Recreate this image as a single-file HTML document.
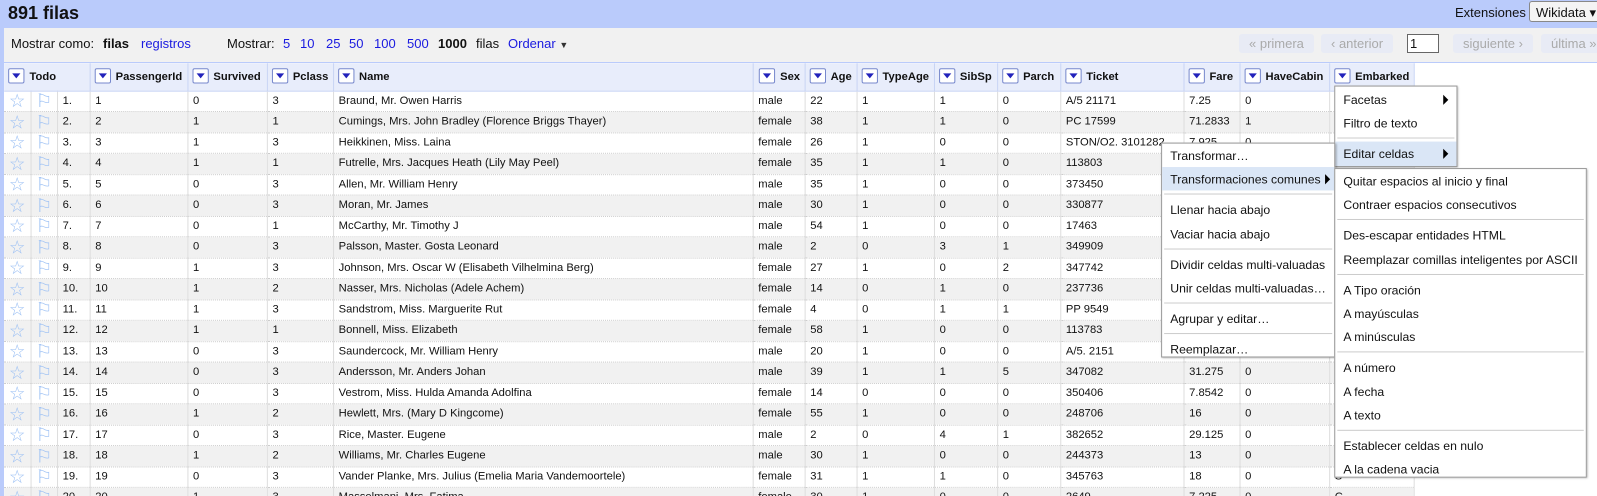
<!DOCTYPE html>
<html style="overflow:hidden;width:1597px;height:496px"><head><meta charset="utf-8"><style>
*{box-sizing:border-box;margin:0;padding:0}
body{width:1597px;height:496px;overflow:hidden;font-family:"Liberation Sans",sans-serif;background:#fff;position:relative;color:#111}
.top{position:absolute;left:0;top:0;width:1597px;height:28px;background:#bacbfb}
.top h1{position:absolute;left:8px;top:3px;font-size:18px;font-weight:bold}
.ext{position:absolute;left:1455px;top:5px;font-size:13px}
.wk{position:absolute;left:1529px;top:1px;width:68px;height:21px;border:1px solid #888;border-right:0;border-radius:3px 0 0 3px;background:#f4f4f4;font-size:13px;padding:3px 6px;white-space:nowrap;overflow:hidden}
.bar{position:absolute;left:4px;top:28px;width:1593px;height:35px;background:#f1f1f1;border-bottom:1px solid #bacbfb;font-size:13px;overflow:hidden}
.bar span{position:absolute;top:8px;white-space:nowrap}
.lnk{color:#1a1ae0}
.pg{position:absolute;top:6px;height:19px;background:#e8ebf5;color:#aaa;font-size:13px;padding:2px 10px;border-radius:3px;white-space:nowrap}
.side{position:absolute;left:0;top:27px;width:4px;height:469px;background:#bacbfb}
.sc{position:absolute;left:0;top:0;width:1568px;height:487px;transform:scale(1.0185);transform-origin:0 0;overflow:hidden}
.wrap{position:absolute;left:4px;top:62px;width:1400px;height:430px;overflow:hidden}
table{width:1384px;border-collapse:collapse;table-layout:fixed;font-size:11px}
th{height:27px;background:#e8edfb;border-right:1px solid #c8d4f4;border-bottom:1px solid #c8d4f4;text-align:left;font-size:11px;font-weight:bold;padding-left:4px;white-space:nowrap}
.dd{display:inline-block;width:16px;height:15px;border:1px solid #7788cc;background:#fff;border-radius:2px;vertical-align:middle;margin-right:5px;position:relative;top:-1px}
.dd:after{content:"";position:absolute;left:3px;top:4px;border-left:4px solid transparent;border-right:4px solid transparent;border-top:5px solid #2222bb}
tr.r{height:20.5px}
td{border-right:1px solid #ddd;border-bottom:1px dotted #ccc;padding-left:5px;white-space:nowrap;overflow:hidden;vertical-align:top;padding-top:3px;line-height:13px}
tr:nth-child(odd) td{background:#f1f1f1}
td.s{padding:0;vertical-align:middle;text-align:center;color:#9cc0f4;font-size:18px;line-height:18px}
.menu{position:absolute;background:#fff;border:1px solid #999;box-shadow:1px 1px 2px rgba(0,0,0,.3);font-size:12px}
.menu div.i{height:23.2px;padding:5px 8px;white-space:nowrap;position:relative}
.menu div.h{background:#dae6f6}
.menu hr{border:0;border-top:1px solid #ccc;margin:3px 2px}
.arr{position:absolute;right:8px;top:7px;border-top:5px solid transparent;border-bottom:5px solid transparent;border-left:5px solid #000}
</style></head><body>
<div class="top"><h1>891 filas</h1><span class="ext">Extensiones</span><div class="wk">Wikidata ▾</div></div>
<div class="side"></div>
<div class="bar">
<span style="left:7px">Mostrar como:</span><span style="left:99px;font-weight:bold">filas</span><span class="lnk" style="left:137px">registros</span>
<span style="left:223px">Mostrar:</span><span class="lnk" style="left:279px">5</span><span class="lnk" style="left:296px">10</span><span class="lnk" style="left:322px">25</span><span class="lnk" style="left:345px">50</span><span class="lnk" style="left:370px">100</span><span class="lnk" style="left:403px">500</span><span style="left:434px;font-weight:bold">1000</span><span style="left:472px">filas</span><span class="lnk" style="left:504px">Ordenar <span style="position:static;color:#333;font-size:9px">▼</span></span>
<div class="pg" style="left:1235px">« primera</div><div class="pg" style="left:1317px">‹ anterior</div>
<div style="position:absolute;left:1403px;top:6px;width:32px;height:19px;border:1px solid #666;background:#fff;padding:1px 2px">1</div>
<div class="pg" style="left:1449px">siguiente ›</div><div class="pg" style="left:1537px">última »</div>
</div>
<div class="sc">
<div class="wrap">
<table>
<colgroup><col style="width:26px"><col style="width:26px"><col style="width:32px"><col style="width:96px"><col style="width:78px"><col style="width:65px"><col style="width:412px"><col style="width:51px"><col style="width:51px"><col style="width:76px"><col style="width:62px"><col style="width:62px"><col style="width:121px"><col style="width:55px"><col style="width:88px"><col style="width:83px"></colgroup>
<tr><th colspan="3"><span class="dd"></span>Todo</th><th><span class="dd"></span>PassengerId</th><th><span class="dd"></span>Survived</th><th><span class="dd"></span>Pclass</th><th><span class="dd"></span>Name</th><th style="text-align:right;padding-right:4px"><span class="dd"></span>Sex</th><th><span class="dd"></span>Age</th><th><span class="dd"></span>TypeAge</th><th><span class="dd"></span>SibSp</th><th><span class="dd"></span>Parch</th><th><span class="dd"></span>Ticket</th><th><span class="dd"></span>Fare</th><th><span class="dd"></span>HaveCabin</th><th><span class="dd"></span>Embarked</th></tr>
<tr class="r"><td class="s">☆</td><td class="s">⚐</td><td>1.</td><td>1</td><td>0</td><td>3</td><td>Braund, Mr. Owen Harris</td><td>male</td><td>22</td><td>1</td><td>1</td><td>0</td><td>A/5 21171</td><td>7.25</td><td>0</td><td>S</td></tr>
<tr class="r"><td class="s">☆</td><td class="s">⚐</td><td>2.</td><td>2</td><td>1</td><td>1</td><td>Cumings, Mrs. John Bradley (Florence Briggs Thayer)</td><td>female</td><td>38</td><td>1</td><td>1</td><td>0</td><td>PC 17599</td><td>71.2833</td><td>1</td><td>C</td></tr>
<tr class="r"><td class="s">☆</td><td class="s">⚐</td><td>3.</td><td>3</td><td>1</td><td>3</td><td>Heikkinen, Miss. Laina</td><td>female</td><td>26</td><td>1</td><td>0</td><td>0</td><td>STON/O2. 3101282</td><td>7.925</td><td>0</td><td>S</td></tr>
<tr class="r"><td class="s">☆</td><td class="s">⚐</td><td>4.</td><td>4</td><td>1</td><td>1</td><td>Futrelle, Mrs. Jacques Heath (Lily May Peel)</td><td>female</td><td>35</td><td>1</td><td>1</td><td>0</td><td>113803</td><td>53.1</td><td>1</td><td>S</td></tr>
<tr class="r"><td class="s">☆</td><td class="s">⚐</td><td>5.</td><td>5</td><td>0</td><td>3</td><td>Allen, Mr. William Henry</td><td>male</td><td>35</td><td>1</td><td>0</td><td>0</td><td>373450</td><td>8.05</td><td>0</td><td>S</td></tr>
<tr class="r"><td class="s">☆</td><td class="s">⚐</td><td>6.</td><td>6</td><td>0</td><td>3</td><td>Moran, Mr. James</td><td>male</td><td>30</td><td>1</td><td>0</td><td>0</td><td>330877</td><td>8.4583</td><td>0</td><td>Q</td></tr>
<tr class="r"><td class="s">☆</td><td class="s">⚐</td><td>7.</td><td>7</td><td>0</td><td>1</td><td>McCarthy, Mr. Timothy J</td><td>male</td><td>54</td><td>1</td><td>0</td><td>0</td><td>17463</td><td>51.8625</td><td>1</td><td>S</td></tr>
<tr class="r"><td class="s">☆</td><td class="s">⚐</td><td>8.</td><td>8</td><td>0</td><td>3</td><td>Palsson, Master. Gosta Leonard</td><td>male</td><td>2</td><td>0</td><td>3</td><td>1</td><td>349909</td><td>21.075</td><td>0</td><td>S</td></tr>
<tr class="r"><td class="s">☆</td><td class="s">⚐</td><td>9.</td><td>9</td><td>1</td><td>3</td><td>Johnson, Mrs. Oscar W (Elisabeth Vilhelmina Berg)</td><td>female</td><td>27</td><td>1</td><td>0</td><td>2</td><td>347742</td><td>11.1333</td><td>0</td><td>S</td></tr>
<tr class="r"><td class="s">☆</td><td class="s">⚐</td><td>10.</td><td>10</td><td>1</td><td>2</td><td>Nasser, Mrs. Nicholas (Adele Achem)</td><td>female</td><td>14</td><td>0</td><td>1</td><td>0</td><td>237736</td><td>30.0708</td><td>0</td><td>C</td></tr>
<tr class="r"><td class="s">☆</td><td class="s">⚐</td><td>11.</td><td>11</td><td>1</td><td>3</td><td>Sandstrom, Miss. Marguerite Rut</td><td>female</td><td>4</td><td>0</td><td>1</td><td>1</td><td>PP 9549</td><td>16.7</td><td>1</td><td>S</td></tr>
<tr class="r"><td class="s">☆</td><td class="s">⚐</td><td>12.</td><td>12</td><td>1</td><td>1</td><td>Bonnell, Miss. Elizabeth</td><td>female</td><td>58</td><td>1</td><td>0</td><td>0</td><td>113783</td><td>26.55</td><td>1</td><td>S</td></tr>
<tr class="r"><td class="s">☆</td><td class="s">⚐</td><td>13.</td><td>13</td><td>0</td><td>3</td><td>Saundercock, Mr. William Henry</td><td>male</td><td>20</td><td>1</td><td>0</td><td>0</td><td>A/5. 2151</td><td>8.05</td><td>0</td><td>S</td></tr>
<tr class="r"><td class="s">☆</td><td class="s">⚐</td><td>14.</td><td>14</td><td>0</td><td>3</td><td>Andersson, Mr. Anders Johan</td><td>male</td><td>39</td><td>1</td><td>1</td><td>5</td><td>347082</td><td>31.275</td><td>0</td><td>S</td></tr>
<tr class="r"><td class="s">☆</td><td class="s">⚐</td><td>15.</td><td>15</td><td>0</td><td>3</td><td>Vestrom, Miss. Hulda Amanda Adolfina</td><td>female</td><td>14</td><td>0</td><td>0</td><td>0</td><td>350406</td><td>7.8542</td><td>0</td><td>S</td></tr>
<tr class="r"><td class="s">☆</td><td class="s">⚐</td><td>16.</td><td>16</td><td>1</td><td>2</td><td>Hewlett, Mrs. (Mary D Kingcome)</td><td>female</td><td>55</td><td>1</td><td>0</td><td>0</td><td>248706</td><td>16</td><td>0</td><td>S</td></tr>
<tr class="r"><td class="s">☆</td><td class="s">⚐</td><td>17.</td><td>17</td><td>0</td><td>3</td><td>Rice, Master. Eugene</td><td>male</td><td>2</td><td>0</td><td>4</td><td>1</td><td>382652</td><td>29.125</td><td>0</td><td>Q</td></tr>
<tr class="r"><td class="s">☆</td><td class="s">⚐</td><td>18.</td><td>18</td><td>1</td><td>2</td><td>Williams, Mr. Charles Eugene</td><td>male</td><td>30</td><td>1</td><td>0</td><td>0</td><td>244373</td><td>13</td><td>0</td><td>S</td></tr>
<tr class="r"><td class="s">☆</td><td class="s">⚐</td><td>19.</td><td>19</td><td>0</td><td>3</td><td>Vander Planke, Mrs. Julius (Emelia Maria Vandemoortele)</td><td>female</td><td>31</td><td>1</td><td>1</td><td>0</td><td>345763</td><td>18</td><td>0</td><td>S</td></tr>
<tr class="r"><td class="s">☆</td><td class="s">⚐</td><td>20.</td><td>20</td><td>1</td><td>3</td><td>Masselmani, Mrs. Fatima</td><td>female</td><td>30</td><td>1</td><td>0</td><td>0</td><td>2649</td><td>7.225</td><td>0</td><td>C</td></tr>
</table>
</div>
<div class="menu" style="left:1310px;top:84px;width:121px;height:80px;padding-top:1px">
<div class="i">Facetas<span class="arr"></span></div><div class="i">Filtro de texto</div><hr><div class="i h">Editar celdas<span class="arr"></span></div>
</div>
<div class="menu" style="left:1140px;top:140px;width:171px;height:211px">
<div class="i">Transformar…</div><div class="i h">Transformaciones comunes<span class="arr" style="right:4px"></span></div><hr><div class="i">Llenar hacia abajo</div><div class="i">Vaciar hacia abajo</div><hr><div class="i">Dividir celdas multi-valuadas</div><div class="i">Unir celdas multi-valuadas…</div><hr><div class="i">Agrupar y editar…</div><hr><div class="i">Reemplazar…</div>
</div>
<div class="menu" style="left:1310px;top:165px;width:248px;height:304px">
<div class="i">Quitar espacios al inicio y final</div><div class="i">Contraer espacios consecutivos</div><hr><div class="i">Des-escapar entidades HTML</div><div class="i">Reemplazar comillas inteligentes por ASCII</div><hr><div class="i">A Tipo oración</div><div class="i">A mayúsculas</div><div class="i">A minúsculas</div><hr><div class="i">A número</div><div class="i">A fecha</div><div class="i">A texto</div><hr><div class="i">Establecer celdas en nulo</div><div class="i">A la cadena vacia</div>
</div>
</div>
</body></html>
